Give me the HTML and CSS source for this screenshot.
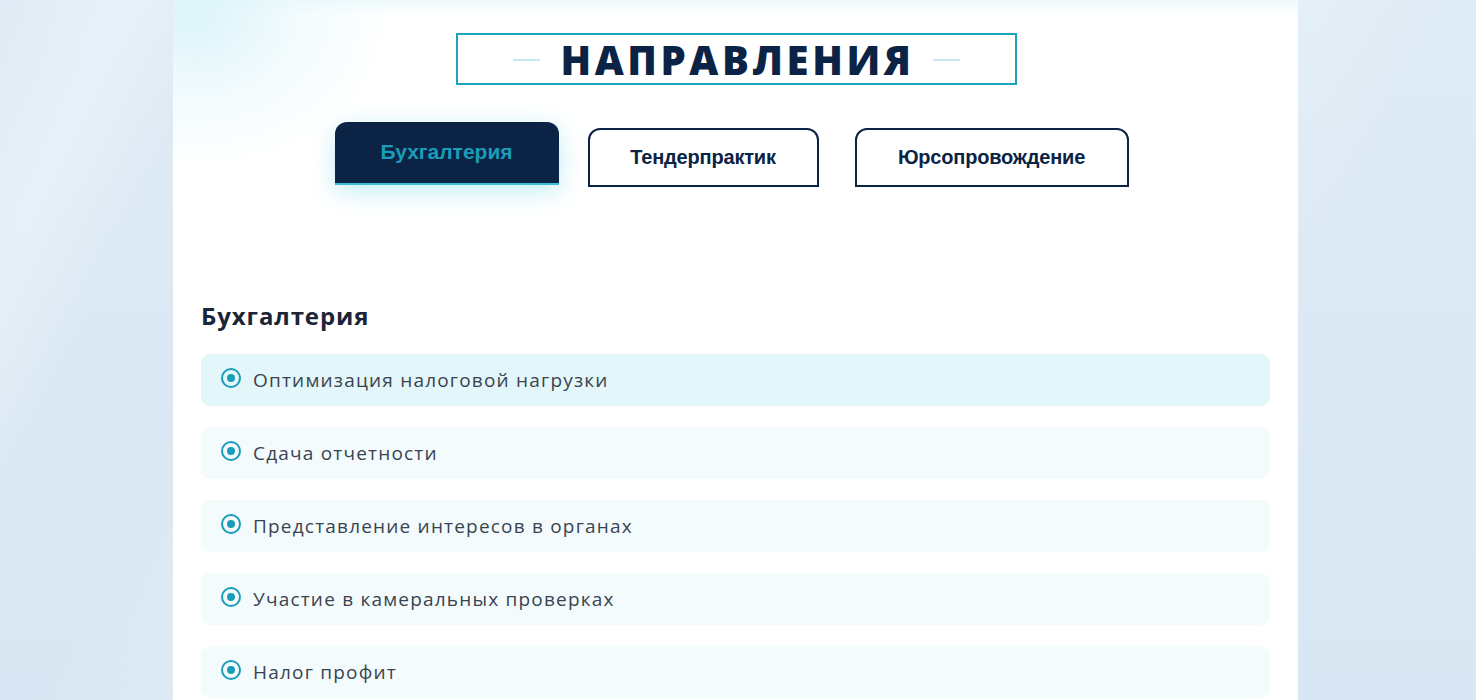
FILE: index.html
```html
<!DOCTYPE html>
<html lang="ru">
<head>
<meta charset="utf-8">
<title>Направления</title>
<link rel="stylesheet" href="styles.css">
</head>
<body>
<div class="page">
  <main class="panel">
    <div class="glow"></div>
    <div class="title-wrap">
      <h1 class="title"><span class="dash"></span>НАПРАВЛЕНИЯ<span class="dash"></span></h1>
    </div>
    <nav class="tabs">
      <button class="tab active">Бухгалтерия</button>
      <button class="tab t2">Тендерпрактик</button>
      <button class="tab t3">Юрсопровождение</button>
    </nav>
    <section class="content">
      <h2 class="heading">Бухгалтерия</h2>
      <ul class="list">
        <li class="item hover"><span class="dot"></span>Оптимизация налоговой нагрузки</li>
        <li class="item"><span class="dot"></span>Сдача отчетности</li>
        <li class="item"><span class="dot"></span>Представление интересов в органах</li>
        <li class="item"><span class="dot"></span>Участие в камеральных проверках</li>
        <li class="item"><span class="dot"></span>Налог профит</li>
      </ul>
    </section>
  </main>
</div>
</body>
</html>
```

FILE: styles.css
```css
* { box-sizing: border-box; }
html, body { margin: 0; padding: 0; }
body {
  height: 700px;
  overflow: hidden;
  background-color: #dce9f4;
  background-image:
    linear-gradient(115deg, rgba(255,255,255,0) 0%, rgba(255,255,255,0.3) 7%, rgba(255,255,255,0) 13%, rgba(255,255,255,0) 20%, rgba(255,255,255,0.15) 27%, rgba(255,255,255,0) 34%, rgba(255,255,255,0) 62%, rgba(255,255,255,0.22) 71%, rgba(255,255,255,0) 80%, rgba(255,255,255,0) 100%),
    linear-gradient(180deg, #dfebf5, #d8e7f3);
  font-family: "Open Sans", "Noto Sans", sans-serif;
}
.page {
  display: flex;
  justify-content: center;
  padding-right: 5px;
}
.panel {
  position: relative;
  width: 1125px;
  min-height: 760px;
  background: linear-gradient(180deg, #eefafc 0px, #ffffff 16px, #ffffff 100%);
  padding: 33px 28px 0;
}
.glow {
  position: absolute;
  left: 0; top: 0;
  width: 380px; height: 220px;
  background: radial-gradient(ellipse 200px 150px at 20px 20px, rgba(214,242,249,0.85), rgba(232,248,252,0.5) 55%, rgba(255,255,255,0) 100%);
  pointer-events: none;
}
.title-wrap {
  position: relative;
  display: flex;
  justify-content: center;
  padding-left: 2px;
}
.title {
  margin: 0;
  width: 561px;
  height: 52px;
  border: 2px solid #1ba3c0;
  display: flex;
  align-items: center;
  justify-content: center;
  gap: 20px;
  font-family: "Open Sans", "Noto Sans", sans-serif;
  font-weight: 800;
  font-size: 40px;
  letter-spacing: 3.6px;
  color: #0b2344;
  line-height: 1;
  padding-top: 1px;
}
.dash {
  display: block;
  width: 27px;
  height: 2px;
  background: #c4e9f1;
}
.title .dash:last-child { margin-left: -2px; }
.tabs {
  position: relative;
  display: flex;
  justify-content: center;
  align-items: flex-start;
  margin-top: 43px;
  padding-right: 8px;
  height: 60px;
}
.tab {
  height: 59px;
  padding: 0;
  border: 2px solid #0b2344;
  border-radius: 12px 12px 0 0;
  background: #ffffff;
  color: #0b2344;
  font-family: "Liberation Sans", Arial, sans-serif;
  font-weight: 700;
  font-size: 20px;
  letter-spacing: -0.2px;
  cursor: pointer;
}
.tab.active {
  margin-top: -6px;
  width: 224px;
  height: 63px;
  background: #0b2344;
  color: #1b9cb9;
  font-size: 21px;
  letter-spacing: 0;
  border: none;
  border-bottom: 2px solid #3cc0d6;
  padding-bottom: 2px;
  box-shadow: 0 6px 24px rgba(120, 214, 232, 0.45);
}
.tab.t2 { margin-left: 29px; width: 231px; }
.tab.t3 { margin-left: 36px; width: 274px; }
.content {
  position: relative;
  margin-top: 111px;
}
.heading {
  margin: 0 0 22px;
  font-family: "Open Sans", "Noto Sans", sans-serif;
  font-weight: 700;
  font-size: 24px;
  line-height: 33px;
  color: #1c2538;
  letter-spacing: 0.9px;
}
.list {
  list-style: none;
  margin: 0;
  padding: 0;
  display: flex;
  flex-direction: column;
  gap: 21px;
}
.item {
  height: 52px;
  border-radius: 9px;
  background: #f3fbfd;
  display: flex;
  align-items: center;
  padding-left: 20px;
  gap: 12px;
  font-family: "Open Sans", "Noto Sans", sans-serif;
  font-size: 19px;
  letter-spacing: 1.2px;
  color: #3a4350;
}
.item.hover { background: #e3f6fa; }
.dot {
  width: 20px;
  height: 20px;
  border: 2.5px solid #1b9cb9;
  border-radius: 50%;
  margin-top: -5px;
  display: flex;
  align-items: center;
  justify-content: center;
  flex: none;
}
.dot::after {
  content: "";
  width: 8px;
  height: 8px;
  border-radius: 50%;
  background: #1b9cb9;
}
```
